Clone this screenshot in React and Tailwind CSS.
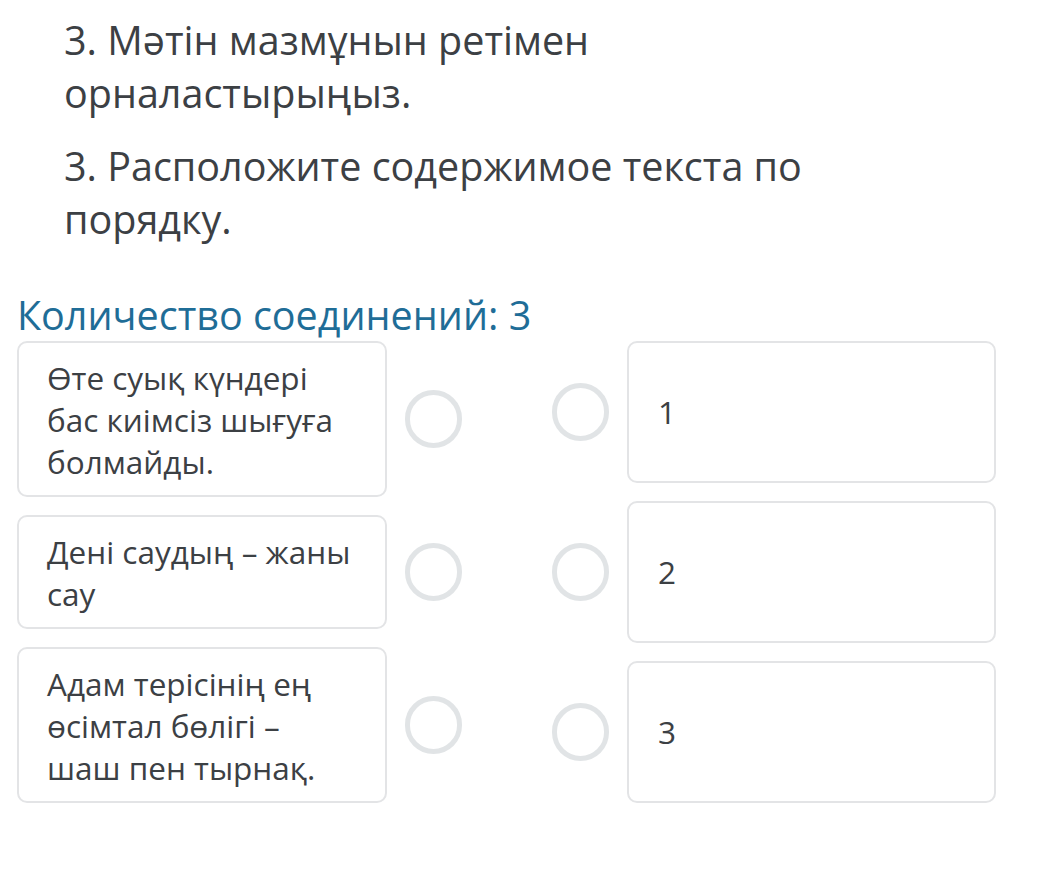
const leftItems = [
  ["Өте суық күндері", "бас киімсіз шығуға", "болмайды."],
  ["Дені саудың – жаны", "сау"],
  ["Адам терісінің ең", "өсімтал бөлігі –", "шаш пен тырнақ."],
];

const rightItems = ["1", "2", "3"];

function Circle() {
  return <div className="w-[57px] h-[58px] shrink-0 rounded-full border-[5px] border-[#e1e4e6]" />;
}

export default function App() {
  return (
    <div
      className="w-[1037px] h-[884px] bg-white text-[#3c4044]"
      style={{ fontFamily: '"Open Sans", "Noto Sans", sans-serif' }}
    >
      <div className="pl-[64px] pt-[14px] text-[39.5px] leading-[53px]">
        <p>
          3. Мәтін мазмұнын ретімен
          <br />
          орналастырыңыз.
        </p>
        <p className="mt-[20px]">
          3. Расположите содержимое текста по
          <br />
          порядку.
        </p>
      </div>

      <div className="pl-[17px] pt-[44px]">
        <h2 className="text-[39.5px] leading-[50px] text-[#1f6d97]">Количество соединений: 3</h2>

        <div className="flex mt-[1px]">
          <div className="flex flex-col gap-[18px]">
            {leftItems.map((lines, i) => (
              <div key={i} className="flex items-center gap-[18px]">
                <div className="w-[370px] rounded-[10px] border-2 border-[#e3e4e6] px-[28px] pt-[14px] pb-[12px] text-[31.5px] leading-[42px]">
                  {lines.map((l, j) => (
                    <div key={j} className="whitespace-nowrap">
                      {l}
                    </div>
                  ))}
                </div>
                <Circle />
              </div>
            ))}
          </div>

          <div className="flex flex-col gap-[18px] ml-[90px]">
            {rightItems.map((n) => (
              <div key={n} className="flex items-center gap-[18px]">
                <Circle />
                <div className="w-[369px] h-[142px] rounded-[10px] border-2 border-[#e3e4e6] pl-[29px] flex items-center text-[31.5px]">
                  {n}
                </div>
              </div>
            ))}
          </div>
        </div>
      </div>
    </div>
  );
}
